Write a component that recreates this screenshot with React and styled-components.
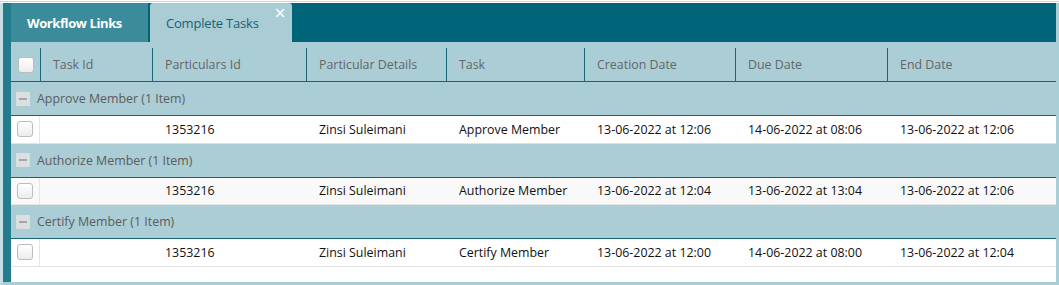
import React from "react";
import styled, { createGlobalStyle } from "styled-components";

const GlobalStyle = createGlobalStyle`
  body {
    margin: 0;
    background: #ffffff;
    font-family: "Open Sans", "Noto Sans", sans-serif;
    font-size: 12.4px;
  }
`;

const Page = styled.div`
  border-top: 1px solid #d4d4d4;
  margin-top: 1px;
  padding-top: 1px;
  width: 1059px;
  box-sizing: border-box;
`;

const Frame = styled.div`
  display: flex;
  height: 282px;
  box-sizing: border-box;
  border-left: 3px solid #c6dfe4;
  border-right: 3px solid #a9cdd5;
  border-bottom: 3px solid #a9cdd5;
`;

const SideBar = styled.div`
  width: 8px;
  background: #237b8b;
`;

const Main = styled.div`
  flex: 1;
  display: flex;
  flex-direction: column;
  background: #ffffff;
`;

const TabBar = styled.div`
  display: flex;
  gap: 2px;
  height: 39px;
  background: #016579;
`;

const Tab = styled.div`
  position: relative;
  display: flex;
  align-items: center;
  box-sizing: border-box;
  width: ${(p) => p.$width}px;
  padding-left: 16px;
  background: ${(p) => (p.$active ? "#a9ccd5" : "#3b8b9b")};
  color: ${(p) => (p.$active ? "#1b5f73" : "#ffffff")};
  font-weight: ${(p) => (p.$active ? 400 : 700)};
  font-size: 13px;
  border-radius: ${(p) => (p.$active ? "3px 3px 0 0" : "0")};
  letter-spacing: ${(p) => (p.$active ? "-0.2px" : "-0.4px")};
`;

const Close = styled.span`
  position: absolute;
  top: 3px;
  right: 6px;
  color: #ffffff;
  font-size: 15px;
  line-height: 15px;
  font-family: "DejaVu Sans", sans-serif;
`;

const columns = "29px 112px 154px 140px 138px 151px 152px 1fr";

const HeaderWrap = styled.div`
  background: #abcdd6;
  padding-top: 6px;
  border-bottom: 1px solid #1a6478;
`;

const HeaderRow = styled.div`
  display: grid;
  grid-template-columns: ${columns};
  height: 33px;
`;

const HeadCell = styled.div`
  display: flex;
  align-items: center;
  justify-content: ${(p) => (p.$center ? "center" : "flex-start")};
  padding-left: ${(p) => (p.$center ? "0" : "12px")};
  padding-bottom: ${(p) => (p.$center ? "0" : "1px")};
  border-left: ${(p) => (p.$first ? "none" : "1px solid #1a6478")};
  color: #666666;
  white-space: nowrap;
`;

const Check = styled.span`
  display: inline-block;
  width: 14px;
  height: 14px;
  border: 1px solid #bdbdbd;
  border-radius: 3px;
  background: linear-gradient(#ffffff, #ececec);
  box-shadow: inset 0 1px 1px rgba(255, 255, 255, 0.8);
`;

const GroupRow = styled.div`
  display: flex;
  align-items: center;
  gap: 7px;
  height: 33px;
  padding-left: 5px;
  background: #abcdd6;
  border-bottom: 1px solid #1a6478;
  color: #5c5c5c;
`;

const Collapse = styled.span`
  position: relative;
  width: 14px;
  height: 14px;
  background: #dcdfe0;
  &::after {
    content: "";
    position: absolute;
    left: 3px;
    right: 3px;
    top: 6px;
    height: 2px;
    background: #a6a6a6;
  }
`;

const DataRow = styled.div`
  display: grid;
  grid-template-columns: ${columns};
  height: 26.5px;
  background: ${(p) => (p.$alt ? "#f9f9f9" : "#ffffff")};
  border-bottom: 1px solid #e3e3e3;
`;

const Cell = styled.div`
  display: flex;
  align-items: center;
  justify-content: ${(p) => (p.$center ? "center" : "flex-start")};
  padding-left: ${(p) => (p.$center ? "0" : "13px")};
  border-right: ${(p) => (p.$center ? "1px solid #e6e6e6" : "none")};
  color: #111111;
  white-space: nowrap;
`;

const headers = [
  "Task Id",
  "Particulars Id",
  "Particular Details",
  "Task",
  "Creation Date",
  "Due Date",
  "End Date",
];

const groups = [
  {
    name: "Approve Member",
    row: ["", "1353216", "Zinsi Suleimani", "Approve Member", "13-06-2022 at 12:06", "14-06-2022 at 08:06", "13-06-2022 at 12:06"],
  },
  {
    name: "Authorize Member",
    row: ["", "1353216", "Zinsi Suleimani", "Authorize Member", "13-06-2022 at 12:04", "13-06-2022 at 13:04", "13-06-2022 at 12:06"],
  },
  {
    name: "Certify Member",
    row: ["", "1353216", "Zinsi Suleimani", "Certify Member", "13-06-2022 at 12:00", "14-06-2022 at 08:00", "13-06-2022 at 12:04"],
  },
];

export default function App() {
  return (
    <>
      <GlobalStyle />
      <Page>
        <Frame>
          <SideBar />
          <Main>
            <TabBar>
              <Tab $width={137}>Workflow Links</Tab>
              <Tab $width={142} $active>
                Complete Tasks
                <Close>×</Close>
              </Tab>
            </TabBar>
            <HeaderWrap>
              <HeaderRow>
                <HeadCell $first $center>
                  <Check />
                </HeadCell>
                {headers.map((h) => (
                  <HeadCell key={h}>{h}</HeadCell>
                ))}
              </HeaderRow>
            </HeaderWrap>
            {groups.map((g, i) => (
              <React.Fragment key={g.name}>
                <GroupRow>
                  <Collapse />
                  {g.name} (1 Item)
                </GroupRow>
                <DataRow $alt={i === 1}>
                  <Cell $center>
                    <Check />
                  </Cell>
                  {g.row.map((v, j) => (
                    <Cell key={j}>{v}</Cell>
                  ))}
                </DataRow>
              </React.Fragment>
            ))}
          </Main>
        </Frame>
      </Page>
    </>
  );
}
